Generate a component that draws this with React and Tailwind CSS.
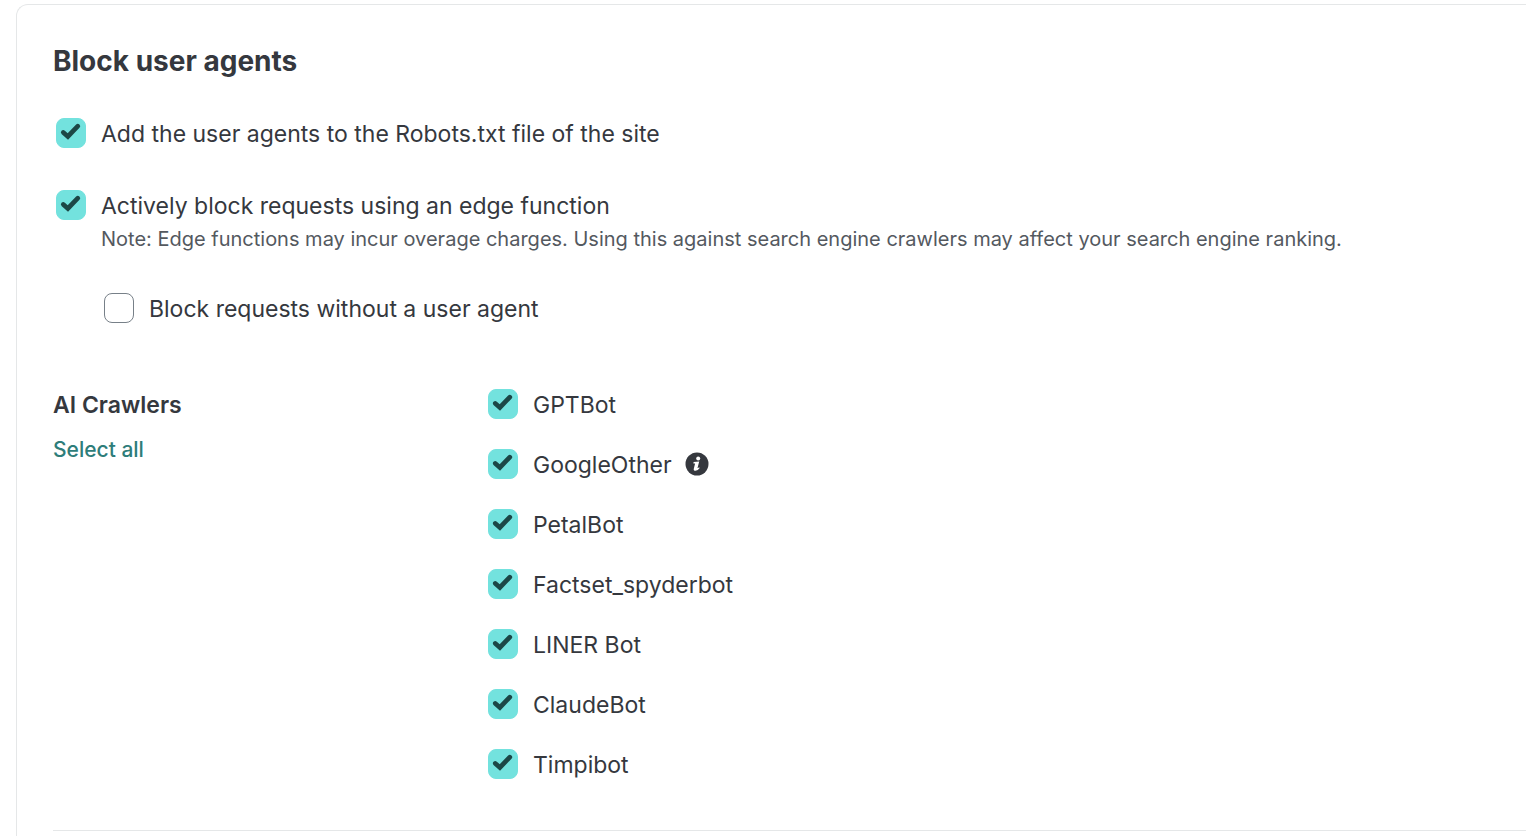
import React, { useState } from "react";

const CRAWLERS = [
  { name: "GPTBot" },
  { name: "GoogleOther", info: "Used by various Google product teams" },
  { name: "PetalBot" },
  { name: "Factset_spyderbot" },
  { name: "LINER Bot" },
  { name: "ClaudeBot" },
  { name: "Timpibot" },
];

function InfoIcon() {
  return (
    <svg viewBox="0 0 24 24" className="size-6" aria-hidden="true">
      <circle cx="12" cy="12" r="11.5" fill="#35383e" />
      <circle cx="13.2" cy="6.4" r="2" fill="#fff" />
      <path
        d="M8.6 10L14.2 9.4L12.5 16.1Q13.2 16.1 14 15.2L14.7 16Q12.8 18.8 10.5 18.8Q8.3 18.8 8.8 16.7L10.1 11.5H8.4Z"
        fill="#fff"
      />
    </svg>
  );
}

function Checkbox({ id, label, checked, onChange, children }) {
  return (
    <div className="flex items-center">
      <span className="ml-[3px] grid size-[30px] shrink-0">
        <input
          id={id}
          type="checkbox"
          checked={checked}
          onChange={onChange}
          className="peer size-[30px] cursor-pointer appearance-none rounded-lg border border-[#778088] bg-white [grid-area:1/1] checked:border-[#73e2de] checked:bg-[#73e2de]"
        />
        <svg
          viewBox="0 0 30 30"
          className="pointer-events-none invisible size-[30px] [grid-area:1/1] peer-checked:visible"
          aria-hidden="true"
        >
          <path
            d="M7.3 14.4L11.9 18.4L21.8 8.2"
            fill="none"
            stroke="#1c4746"
            strokeWidth="4.7"
            strokeLinecap="round"
            strokeLinejoin="miter"
          />
        </svg>
      </span>
      <label htmlFor={id} className="cursor-pointer pt-0.5 pl-[15px] text-[23px] leading-[34px]">
        {label}
      </label>
      {children}
    </div>
  );
}

export default function App() {
  const [robots, setRobots] = useState(true);
  const [edge, setEdge] = useState(true);
  const [noAgent, setNoAgent] = useState(false);
  const [selected, setSelected] = useState(CRAWLERS.map(c => c.name));

  function toggleCrawler(name) {
    setSelected(prev => prev.includes(name) ? prev.filter(n => n !== name) : [...prev, name]);
  }

  return (
    <div className="min-h-screen bg-white pt-1 pl-4 font-['Inter','Liberation_Sans',sans-serif] text-[#35383e]">
      <main className="min-h-[calc(100vh-4px)] rounded-tl-xl border-t border-l border-[#e5e7e8] pt-[38px] pl-9">
        <h2 className="text-[28px] leading-9 font-bold">Block user agents</h2>

        <section className="mt-9">
          <Checkbox
            id="robots"
            label="Add the user agents to the Robots.txt file of the site"
            checked={robots}
            onChange={() => setRobots(!robots)}
          />
          <div className="mt-9">
            <Checkbox
              id="edge"
              label="Actively block requests using an edge function"
              checked={edge}
              onChange={() => setEdge(!edge)}
            />
            <p className="pl-12 text-[20px] leading-8 text-[#54595f]">
              Note: Edge functions may incur overage charges. Using this against search engine crawlers may affect your search engine ranking.
            </p>
          </div>
          <div className="mt-[35px] pl-12">
            <Checkbox
              id="no-agent"
              label="Block requests without a user agent"
              checked={noAgent}
              onChange={() => setNoAgent(!noAgent)}
            />
          </div>
        </section>

        <section className="mt-[60px] flex border-b border-[#e5e7e8] pb-12">
          <div className="w-[432px] shrink-0">
            <h3 className="pt-0.5 text-[23px] leading-[34px] font-semibold">AI Crawlers</h3>
            <button
              type="button"
              onClick={() => setSelected(CRAWLERS.map(c => c.name))}
              className="mt-2.5 block cursor-pointer text-[21px] leading-9 font-medium text-[#2e7d7a]"
            >
              Select all
            </button>
          </div>
          <ul className="flex flex-col gap-6">
            {CRAWLERS.map(c => (
              <li key={c.name}>
                <Checkbox
                  id={c.name}
                  label={c.name}
                  checked={selected.includes(c.name)}
                  onChange={() => toggleCrawler(c.name)}
                >
                  {c.info && (
                    <button type="button" aria-label={c.info} className="ml-[13px] cursor-pointer">
                      <InfoIcon />
                    </button>
                  )}
                </Checkbox>
              </li>
            ))}
          </ul>
        </section>
      </main>
    </div>
  );
}
